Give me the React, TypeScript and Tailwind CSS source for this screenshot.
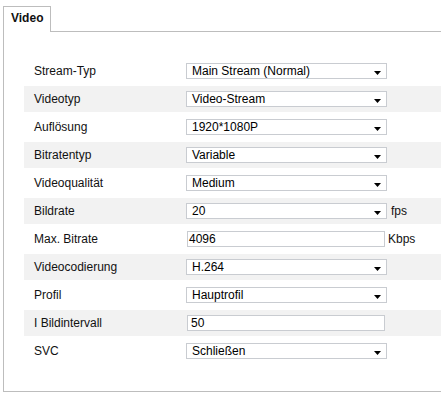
import React from "react";

type Field = {
  label: string;
  value: string;
  kind: "select" | "input";
  unit?: string;
  pad?: string;
};

const fields: Field[] = [
  { label: "Stream-Typ", value: "Main Stream (Normal)", kind: "select" },
  { label: "Videotyp", value: "Video-Stream", kind: "select" },
  { label: "Auflösung", value: "1920*1080P", kind: "select" },
  { label: "Bitratentyp", value: "Variable", kind: "select" },
  { label: "Videoqualität", value: "Medium", kind: "select" },
  { label: "Bildrate", value: "20", kind: "select", unit: "fps" },
  { label: "Max. Bitrate", value: "4096", kind: "input", unit: "Kbps", pad: "pl-px" },
  { label: "Videocodierung", value: "H.264", kind: "select" },
  { label: "Profil", value: "Hauptrofil", kind: "select" },
  { label: "I Bildintervall", value: "50", kind: "input", pad: "pl-[3px]" },
  { label: "SVC", value: "Schließen", kind: "select" },
];

function Arrow() {
  return (
    <svg width="7" height="4" viewBox="0 0 7 4" className="absolute right-[5px] bottom-[3px]">
      <polygon points="0,0 7,0 3.5,4" fill="#000" />
    </svg>
  );
}

function Row({ field, striped }: { field: Field; striped: boolean }) {
  return (
    <div className="h-[28px] py-px">
      <div className={`flex h-[26px] items-center ${striped ? "bg-[#f2f2f2]" : ""}`}>
        <div className="w-[162px] pl-[10px] text-[#111]">{field.label}</div>

        {field.kind === "select" ? (
          <div className="relative h-[16px] w-[201px] border border-[#c9ccd1] bg-white pl-[5px] leading-[14px] text-black">
            {field.value}
            <Arrow />
          </div>
        ) : (
          <div className={`ml-px h-[16px] w-[198px] border border-[#c9ccd1] bg-white leading-[14px] text-black ${field.pad}`}>
            {field.value}
          </div>
        )}

        {field.unit && (
          <span className={field.kind === "select" ? "ml-[4px] text-[#111]" : "ml-[3px] text-[#111]"}>
            {field.unit}
          </span>
        )}
      </div>
    </div>
  );
}

export default function App() {
  return (
    <div className="h-[397px] w-[441px] overflow-hidden bg-white font-['Liberation_Sans',Arial,sans-serif] text-[12px]">
      <div className="w-[480px] pl-[3px] pt-[6px]">

        {/* Tabs */}
        <div className="flex">
          <div className="h-[26px] w-[48px] border border-b-0 border-[#bdbdbd] pl-[7px] pt-[4px] font-bold leading-[14px] text-[#111]">
            Video
          </div>
          <div className="h-[26px] flex-1 border-b border-[#bdbdbd]" />
        </div>

        {/* Panel */}
        <div className="h-[360px] border-b border-l border-[#bdbdbd] pl-[20px] pt-[25px]">
          {fields.map((f, i) => (
            <Row key={f.label} field={f} striped={i % 2 === 1} />
          ))}
        </div>

      </div>
    </div>
  );
}
